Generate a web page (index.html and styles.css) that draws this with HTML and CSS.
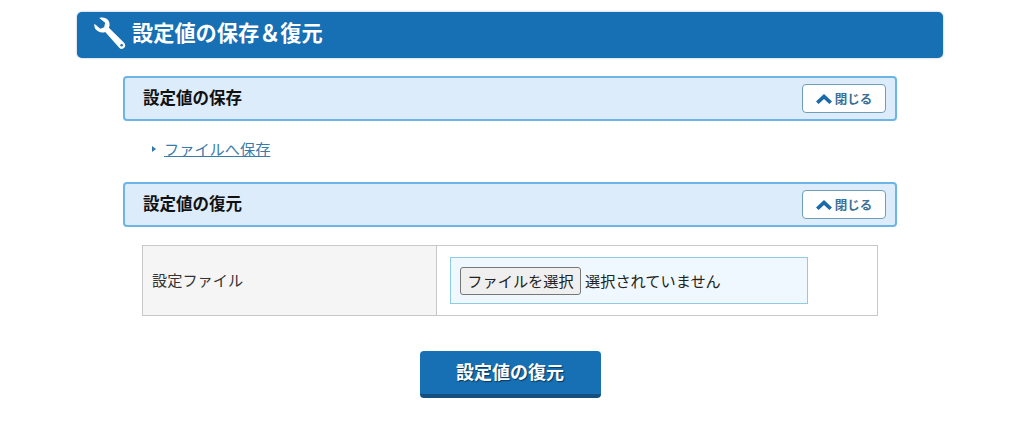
FILE: index.html
```html
<!DOCTYPE html>
<html lang="ja">
<head>
  <meta charset="UTF-8">
  <title>設定値の保存＆復元</title>
  <link rel="stylesheet" href="styles.css">
</head>
<body>
  <div class="wrap">
    <!-- ページ見出し -->
    <h1 class="page-title">
      <svg class="wrench" width="33" height="33" viewBox="0 0 34 34">
        <path d="M1.5 7 L7.5 12 L11.5 10.5 L12.5 6 L6.5 1 C10 -0.2 15 1 16.6 4.8 C17.4 7 17.2 9.2 16.4 11 L32 26.5 C33.6 28.2 33.6 30.4 32.2 31.8 C30.6 33.4 28.4 33.2 27 31.6 L12.6 15.4 C10.6 16.2 8 16.2 5.6 15 C2.4 13.4 0.8 10.4 1.5 7 Z" fill="#fff"/>
        <circle cx="29.5" cy="29.2" r="1.3" fill="#1a6fb5"/>
      </svg>
      <span class="page-title-text">設定値の保存＆復元</span>
    </h1>

    <div class="inner">
      <div class="section-head">
        <h2>設定値の保存</h2>
        <button class="close-btn">
          <svg width="16" height="10" viewBox="0 0 16 10"><path d="M8 0 L16 7.5 L13.4 10 L8 5 L2.6 10 L0 7.5 Z" fill="#1a6aa8"/></svg>
          閉じる
        </button>
      </div>
      <ul class="links">
        <li><a href="#">ファイルへ保存</a></li>
      </ul>

      <div class="section-head">
        <h2>設定値の復元</h2>
        <button class="close-btn">
          <svg width="16" height="10" viewBox="0 0 16 10"><path d="M8 0 L16 7.5 L13.4 10 L8 5 L2.6 10 L0 7.5 Z" fill="#1a6aa8"/></svg>
          閉じる
        </button>
      </div>

      <table class="form-table">
        <tr>
          <th>設定ファイル</th>
          <td>
            <div class="file-box">
              <span class="file-btn">ファイルを選択</span>
              <span class="file-text">選択されていません</span>
            </div>
          </td>
        </tr>
      </table>

      <div class="submit-row">
        <button class="submit-btn">設定値の復元</button>
      </div>
    </div>
  </div>
</body>
</html>
```

FILE: styles.css
```css
body {
  margin: 0;
  background-color: #fff;
  font-family: "Noto Sans CJK JP", "Liberation Sans", sans-serif;
  color: #333;
}

.wrap {
  width: 866px;
  margin: 0 0 0 77px;
  padding-top: 12px;
}

.page-title {
  display: flex;
  align-items: center;
  gap: 6px;
  height: 46px;
  margin: 0;
  padding: 0 0 4px 16px;
  box-sizing: border-box;
  background-color: #176fb4;
  border-radius: 5px;
  box-shadow: 0 0 2px rgba(0, 60, 120, 0.45);
  color: #fff;
  font-size: 21.2px;
  font-weight: 700;
}

.page-title-text {
  margin-bottom: 4px;
}

.inner {
  margin: 0 46px;
  padding-top: 18px;
}

.section-head {
  display: flex;
  align-items: center;
  justify-content: space-between;
  height: 45px;
  box-sizing: border-box;
  padding: 0 9px 0 18px;
  background-color: #dcecfb;
  border: 2px solid #6db5e6;
  border-radius: 4px;
}

.section-head h2 {
  margin: 0 0 4px;
  font-size: 16.5px;
  font-weight: 700;
  color: #111;
}

.close-btn {
  display: flex;
  align-items: center;
  justify-content: center;
  gap: 3px;
  width: 84px;
  height: 29px;
  padding: 0;
  background-color: #fff;
  border: 1px solid #6f9fb8;
  border-radius: 4px;
  color: #3a6f96;
  font-family: inherit;
  font-size: 12.5px;
  font-weight: 700;
}

.links {
  list-style: none;
  margin: 0;
  padding: 15px 0 22px 41px;
  font-size: 15.2px;
  line-height: 24px;
}

.links li {
  display: flex;
  align-items: center;
}

.links li::before {
  content: "";
  width: 0;
  height: 0;
  margin: 2px 8px 0 -12px;
  border-left: 4px solid #2e78a8;
  border-top: 3px solid transparent;
  border-bottom: 3px solid transparent;
}

.links a {
  color: #3a7ba8;
}

.form-table {
  width: 736px;
  margin: 18px 0 0 19px;
  border-collapse: collapse;
  font-size: 15.2px;
}

.form-table th,
.form-table td {
  height: 70px;
  box-sizing: border-box;
  border: 1px solid #c8c8c8;
  padding: 0;
}

.form-table th {
  width: 294px;
  padding: 0 0 4px 9px;
  background-color: #f5f5f5;
  color: #333;
  font-weight: 400;
  text-align: left;
}

.form-table td {
  padding-left: 13px;
}

.file-box {
  display: flex;
  align-items: center;
  gap: 4px;
  width: 358px;
  height: 47px;
  box-sizing: border-box;
  padding-left: 9px;
  background-color: #eff8fe;
  border: 1px solid #8fcbe4;
}

.file-btn {
  display: flex;
  align-items: center;
  justify-content: center;
  width: 121px;
  height: 28px;
  padding-bottom: 2px;
  box-sizing: border-box;
  background-color: #efefef;
  border: 1px solid #767676;
  border-radius: 3px;
  color: #222;
  font-size: 15.2px;
}

.file-text {
  margin-bottom: 2px;
  color: #222;
  font-size: 15.2px;
}

.submit-row {
  display: flex;
  justify-content: center;
  margin-top: 35px;
}

.submit-btn {
  width: 181px;
  height: 47px;
  padding: 0 0 4px;
  background-color: #176fb4;
  border: none;
  border-bottom: 4px solid #14507f;
  border-radius: 4px;
  color: #fff;
  font-family: inherit;
  font-size: 18px;
  font-weight: 700;
  text-shadow: 1px 1px 1px rgba(0, 0, 0, 0.5);
}
```
